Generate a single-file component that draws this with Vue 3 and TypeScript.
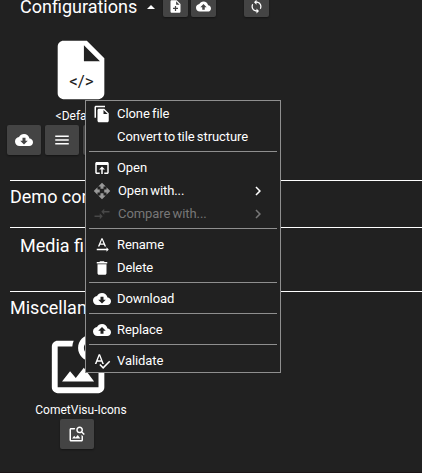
<script setup lang="ts">
const cloud = 'M19.35 10.04C18.67 6.59 15.64 4 12 4 9.11 4 6.6 5.64 5.35 8.04 2.34 8.36 0 10.91 0 14c0 3.31 2.69 6 6 6h13c2.76 0 5-2.24 5-5 0-2.64-2.05-4.78-4.65-4.96z'
const icons = {
  file: 'M14 2H6c-1.1 0-1.99.9-1.99 2L4 20c0 1.1.89 2 1.99 2H18c1.1 0 2-.9 2-2V8l-6-6zm-1 7V3.5L18.5 9H13z',
  add: 'M14 2H6c-1.1 0-1.99.9-1.99 2L4 20c0 1.1.89 2 1.99 2H18c1.1 0 2-.9 2-2V8l-6-6zm2 14h-3v3h-2v-3H8v-2h3v-3h2v3h3v2zm-3-7V3.5L18.5 9H13z',
  upload: cloud + 'M14 13v4h-4v-4H7l5-5 5 5h-3z',
  download: cloud + 'M17 13l-5 5-5-5h3V9h4v4h3z',
  sync: 'M12 4V1L8 5l4 4V6c3.31 0 6 2.69 6 6 0 1.01-.25 1.97-.7 2.8l1.46 1.46C19.54 15.03 20 13.57 20 12c0-4.42-3.58-8-8-8zm0 14c-3.31 0-6-2.69-6-6 0-1.01.25-1.97.7-2.8L5.24 7.74C4.46 8.97 4 10.43 4 12c0 4.42 3.58 8 8 8v3l4-4-4-4v3z',
  menu: 'M3 18h18v-2H3v2zm0-5h18v-2H3v2zm0-7v2h18V6H3z',
  copy: 'M16 1H4c-1.1 0-2 .9-2 2v14h2V3h12V1zm-1 4l6 6v10c0 1.1-.9 2-2 2H7.99C6.89 23 6 22.1 6 21l.01-14c0-1.1.89-2 1.99-2h7zm-1 7h5.5L14 6.5V12z',
  open: 'M19 4H5c-1.11 0-2 .9-2 2v12c0 1.1.89 2 2 2h4v-2H5V8h14v10h-4v2h4c1.1 0 2-.9 2-2V6c0-1.1-.89-2-2-2zm-7 6l-4 4h3v6h2v-6h3l-4-4z',
  openWith: 'M10 9h4V6h3l-5-5-5 5h3v3zm-1 1H6V7l-5 5 5 5v-3h3v-4zm14 2l-5-5v3h-3v4h3v3l5-5zm-9 3h-4v3H7l5 5 5-5h-3v-3z',
  compare: 'M9.01 14H2v2h7.01v3L13 15l-3.99-4v3zm5.98-1v-3H22V8h-7.01V5L11 9l3.99 4z',
  rename: 'M21 18l-3-3v2H5v2h13v2l3-3zM9.5 11.8h5l.9 2.2h2.1L12.75 3h-1.5L6.5 14h2.1l.9-2.2zM12 4.98L13.87 10h-3.74L12 4.98z',
  remove: 'M6 19c0 1.1.9 2 2 2h8c1.1 0 2-.9 2-2V7H6v12zM19 4h-3.5l-1-1h-5l-1 1H5v2h14V4z',
  validate: 'M12.45 16h2.09L9.43 3H7.57L2.46 16h2.09l1.12-3h5.64l1.14 3zm-6.02-5L8.5 5.48 10.57 11H6.43zm15.16.59l-8.09 8.09L9.83 16l-1.41 1.41 5.09 5.09L23 13l-1.41-1.41z',
  chevron: 'M10 6L8.59 7.41 13.17 12l-4.58 4.59L10 18l6-6z',
  image: 'M18 13v7H4V6h5.02c.05-.71.22-1.38.48-2H4c-1.1 0-2 .9-2 2v14c0 1.1.9 2 2 2h14c1.1 0 2-.9 2-2v-5l-2-2zm-1.5 5h-11l2.75-3.53 1.96 2.36 2.75-3.54zm2.8-9.11c.44-.7.7-1.51.7-2.39C20 4.01 17.99 2 15.5 2S11 4.01 11 6.5s2.01 4.5 4.49 4.5c.88 0 1.7-.26 2.39-.7L21 13.42 22.42 12 19.3 8.89zM15.5 9C14.12 9 13 7.88 13 6.5S14.12 4 15.5 4 18 5.12 18 6.5 16.88 9 15.5 9z',
}

interface Item {
  label: string
  icon?: keyof typeof icons
  sub?: boolean
  disabled?: boolean
}

const groups: Item[][] = [
  [{ label: 'Clone file', icon: 'copy' }, { label: 'Convert to tile structure' }],
  [
    { label: 'Open', icon: 'open' },
    { label: 'Open with...', icon: 'openWith', sub: true },
    { label: 'Compare with...', icon: 'compare', sub: true, disabled: true },
  ],
  [{ label: 'Rename', icon: 'rename' }, { label: 'Delete', icon: 'remove' }],
  [{ label: 'Download', icon: 'download' }],
  [{ label: 'Replace', icon: 'upload' }],
  [{ label: 'Validate', icon: 'validate' }],
]
</script>

<template>
  <div class="page">
    <header class="toolbar">
      <h2>Configurations</h2>
      <i class="caret"></i>
      <button class="tool"><svg viewBox="0 0 24 24"><path :d="icons.add" /></svg></button>
      <button class="tool"><svg viewBox="0 0 24 24"><path :d="icons.upload" /></svg></button>
      <button class="tool reload"><svg viewBox="0 0 24 24"><path :d="icons.sync" /></svg></button>
    </header>

    <section class="files">
      <div class="tile">
        <div class="thumb">
          <svg class="big" viewBox="0 0 24 24"><path :d="icons.file" /></svg>
          <span class="code">&lt;/&gt;</span>
        </div>
        <span class="name">&lt;Default&gt;</span>
        <div class="actions">
          <button class="action"><svg viewBox="0 0 24 24"><path :d="icons.download" /></svg></button>
          <button class="action"><svg viewBox="0 0 24 24"><path :d="icons.menu" /></svg></button>
          <button class="action"></button>
          <button class="action"></button>
        </div>
      </div>
    </section>

    <section class="row demo"><h2>Demo configurations</h2></section>
    <section class="row media"><h2>Media files</h2></section>
    <section class="row misc"><h2>Miscellaneous</h2></section>

    <div class="tile icons-tile">
      <svg class="big" viewBox="0 0 24 24"><path :d="icons.image" /></svg>
      <span class="name">CometVisu-Icons</span>
      <div class="actions">
        <button class="action"><svg viewBox="0 0 24 24"><path :d="icons.image" /></svg></button>
      </div>
    </div>

    <nav class="menu">
      <div v-for="(group, g) in groups" :key="g" class="group">
        <div v-for="item in group" :key="item.label" class="item" :class="{ sub: item.sub, disabled: item.disabled }">
          <svg class="icon" viewBox="0 0 24 24"><path v-if="item.icon" :d="icons[item.icon]" /></svg>
          <span class="label">{{ item.label }}</span>
          <svg v-if="item.sub" class="arrow" viewBox="0 0 24 24"><path :d="icons.chevron" /></svg>
        </div>
      </div>
    </nav>
  </div>
</template>

<style>
body { background: #212121; }
</style>

<style scoped>
.page { position: relative; box-sizing: border-box; width: 422px; height: 473px; overflow: hidden; background: #212121; border-bottom: 1px solid #1b1517; color: #fff; font-family: Roboto, "Liberation Sans", sans-serif; }
svg { display: block; fill: currentColor; flex: none; }
h2 { margin: 0; font-size: 18px; font-weight: 400; line-height: 22px; white-space: nowrap; }
button { margin: 0; padding: 0; border: 0; color: #fff; background: #444; display: flex; align-items: center; justify-content: center; border-radius: 2px; box-shadow: 0 1px 2px rgba(0, 0, 0, .4); flex: none; }
.toolbar { display: flex; height: 35px; padding-left: 20px; }
.toolbar h2 { width: 127px; margin-top: -4px; }
.caret { width: 0; height: 0; margin: 5px 8px 0 0; border: 4px solid transparent; border-top: 0; border-bottom-color: #fff; }
.tool { width: 25px; height: 25px; margin: -8px 3px 0 0; padding-top: 4px; box-sizing: border-box; }
.tool svg { width: 15px; height: 15px; }
.reload { margin-left: 25px; }
.files { height: 145px; padding-left: 7px; }
.tile { width: 148px; display: flex; flex-direction: column; align-items: center; }
.thumb { display: grid; }
.thumb > * { grid-area: 1 / 1; }
.big { width: 70px; height: 70px; }
.code { color: #212121; font-size: 17px; line-height: 20px; text-align: center; margin-top: 36px; padding-left: 1px; }
.name { font-size: 12px; line-height: 14px; margin-top: 4px; white-space: nowrap; }
.actions { display: flex; gap: 4px; margin-top: 2px; }
.action { width: 34px; height: 30px; }
.action svg { width: 18px; height: 18px; }
.row { box-sizing: border-box; margin-left: 10px; border-top: 1px solid #fff; }
.demo { height: 47px; padding-top: 5px; }
.media { height: 64px; padding: 7px 0 0 10px; }
.misc { height: 38px; padding-top: 5px; }
.icons-tile { margin-left: 7px; }
.icons-tile .actions { margin-right: 8px; }
.menu { position: absolute; left: 85px; top: 100px; width: 196px; height: 273px; box-sizing: border-box; padding: 1px 3px 0; background: #212121; border: 1px solid #8f8f8f; }
.group + .group { border-top: 1px solid #8f8f8f; margin-top: 3px; padding-top: 4px; }
.item { display: flex; align-items: center; height: 23px; padding: 0 10px 0 4px; font-size: 13px; letter-spacing: -0.08px; word-spacing: -0.9px; }
.icon { width: 18px; height: 18px; }
.label { margin-left: 6px; white-space: nowrap; flex: 1; }
.sub .label { margin-left: 7px; }
.sub .icon { color: #999; }
.arrow { width: 18px; height: 18px; }
.disabled { color: #777; }
.disabled .icon { color: #484848; }
</style>
